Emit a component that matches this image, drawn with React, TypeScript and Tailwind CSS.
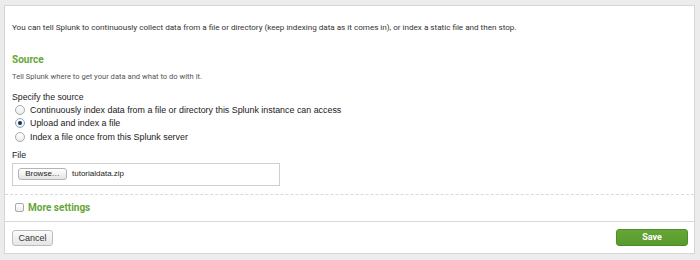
import React from 'react';

const sans = 'font-["Roboto","Liberation_Sans",sans-serif]';
const form = 'font-["Liberation_Sans","Helvetica",Arial,sans-serif]';

function Radio({ checked, label }: { checked?: boolean; label: string }) {
  return (
    <div className="flex h-[13.5px] items-center pl-[3px]">
      <span
        className={
          'flex h-[10px] w-[10px] items-center justify-center rounded-full border bg-gradient-to-b from-white to-[#ececec] ' +
          (checked ? 'border-[#7da6d8]' : 'border-[#a9a9a9]')
        }
      >
        {checked ? <span className="h-[4px] w-[4px] rounded-full bg-[#2d2d2d]" /> : null}
      </span>
      <span className="ml-[5px] text-[8.9px] leading-[12px] text-[#222]">{label}</span>
    </div>
  );
}

export default function App() {
  return (
    <div className={'h-[260px] w-[700px] bg-[#ececec] pl-[4px] pt-[5px] ' + sans}>
      <div className="flex h-[249px] w-[691px] flex-col border border-[#d6d6d6] bg-white">
        <div className="h-[188px] px-[7px] pt-[16px]">
          <p className="text-[8.1px] leading-[10px] text-[#333]">
            You can tell Splunk to continuously collect data from a file or directory (keep indexing data as it comes in), or index a static file and then stop.
          </p>
          <h2 className="mt-[22px] text-[10px] font-bold leading-[12px] text-[#65a637]">Source</h2>
          <p className="mt-[6px] text-[7.6px] leading-[10px] text-[#555]">Tell Splunk where to get your data and what to do with it.</p>

          <div className={form}>
            <div className="mt-[9px] text-[8.7px] leading-[12px] text-[#222]">Specify the source</div>
            <Radio label="Continuously index data from a file or directory this Splunk instance can access" />
            <Radio checked label="Upload and index a file" />
            <Radio label="Index a file once from this Splunk server" />

            <div className="mt-[5px] text-[8.7px] leading-[12px] text-[#222]">File</div>
            <div className="mt-[2px] flex h-[23px] w-[268px] items-start border border-[#cfcfcf] pl-[5px] pt-[4px]">
              <span className="flex h-[12px] w-[49px] items-center justify-center rounded-[3px] border border-[#b4b4b4] bg-gradient-to-b from-white to-[#e4e4e4] text-[8px] text-[#222]">
                Browse…
              </span>
              <span className="ml-[5px] text-[8px] leading-[12px] text-[#222]">tutorialdata.zip</span>
            </div>
          </div>
        </div>

        <div className="flex h-[27px] items-center border-t border-dashed border-[#d9d9d9] pl-[10px] pb-[1px]">
          <span className="h-[9px] w-[9px] rounded-[2px] border border-[#a9a9a9] bg-gradient-to-b from-white to-[#ececec]" />
          <span className="ml-[4px] text-[10px] font-bold leading-[12px] text-[#65a637]">More settings</span>
        </div>

        <div className="flex flex-1 items-center justify-between border-t border-[#d9d9d9] pl-[7px] pr-[6px]">
          <button
            type="button"
            className={'h-[16px] w-[41px] rounded-[3px] border border-[#bdbdbd] bg-gradient-to-b from-[#fbfbfb] to-[#e6e6e6] text-[9px] leading-[14px] text-[#333] ' + form}
          >
            Cancel
          </button>
          <button
            type="button"
            className="h-[17px] w-[72px] rounded-[3px] border border-[#4d8d26] bg-gradient-to-b from-[#65a637] to-[#589a2d] text-[9px] font-bold leading-[15px] text-white"
          >
            Save
          </button>
        </div>
      </div>
    </div>
  );
}
